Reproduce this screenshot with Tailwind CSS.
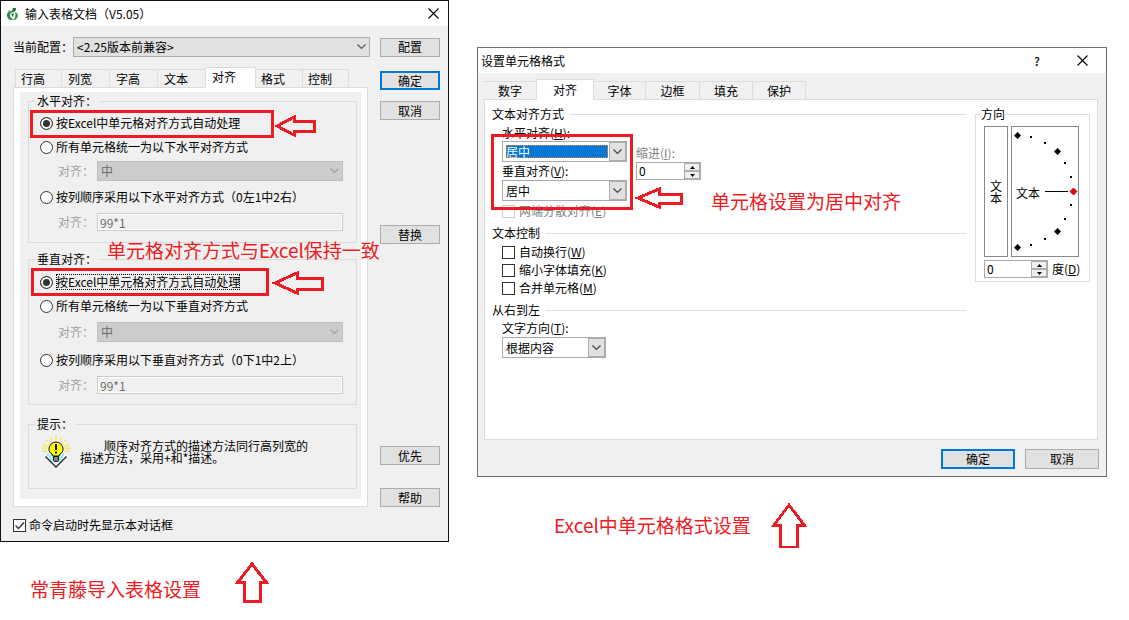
<!DOCTYPE html>
<html lang="zh-CN">

<head>
    <meta charset="UTF-8">
    <meta name="viewport" content="width=device-width, initial-scale=1.0">
    <title>单元格对齐设置</title>
    <script src="https://cdn.jsdelivr.net/npm/@tailwindcss/browser@4"></script>
</head>

<body class="flex items-start bg-white font-['Noto_Sans_CJK_SC',sans-serif] text-[12px] leading-4 text-black">
    <!-- Import dialog -->
    <section class="w-[449px] shrink-0">
        <div class="relative">
            <div class="border border-[#111] bg-[#f0f0f0]">
                <!-- Title bar -->
                <header class="flex h-[25px] items-center bg-white pr-[9px] pl-[5px]">
                    <svg class="mr-1.5 h-[14px] w-[13px]" viewBox="0 0 13 14">
                        <path d="M9 1l1 2-2 2C6 5 4 6 4 8c0 2 1 3 3 4l-1 1C3 13 1 11 1 8c0-3 3-4 5-4z" fill="#2f8a4a" />
                        <path d="M9 5c3 1 4 4 2 6-1 2-3 2-5 2 3-1 4-4 3-8z" fill="#3f9a55" />
                        <path d="M7 1h3l-1 3-3 1z" fill="#1b6b30" />
                        <path d="M2 4l2-1-1 2zM5 7l3-1-1 4z" fill="#1f7a3a" />
                    </svg>
                    <h1 class="flex-1">输入表格文档（V5.05）</h1>
                    <button type="button" aria-label="关闭">
                        <svg class="h-[11px] w-[11px]" viewBox="0 0 11 11" fill="none" stroke="#000" stroke-width="1.1">
                            <path d="M.5.5l10 10M10.500 .5l-10 10" />
                        </svg>
                    </button>
                </header>

                <form class="pt-[11px] pr-2 pb-2 pl-3">
                    <!-- Current profile -->
                    <div class="flex items-center">
                        <label for="profile" class="w-[60px]">当前配置：</label>
                        <div class="relative flex-1">
                            <select id="profile" class="block h-5 w-full appearance-none border border-[#adadad] bg-[#e1e1e1] pl-[3px]">
                                <option>&lt;2.25版本前兼容&gt;</option>
                            </select>
                            <svg class="pointer-events-none absolute top-[7px] right-1 h-[6px] w-[9px]" viewBox="0 0 9 6" fill="none" stroke="#555" stroke-width="1.2">
                                <path d="M.5 .5l4 4l4-4" />
                            </svg>
                        </div>
                        <button type="button" class="ml-2.5 h-[19px] w-[60px] border border-[#adadad] bg-[#e1e1e1]">配置</button>
                    </div>

                    <div class="flex gap-3 pt-2.5">
                        <div class="flex-1">
                            <!-- Tabs -->
                            <nav class="flex items-end pl-0.5">
                                <button type="button" class="h-[18px] w-[47px] border border-b-0 border-[#dcdcdc] pl-[5px] text-left">行高</button>
                                <button type="button" class="h-[18px] w-12 border border-b-0 border-l-0 border-[#dcdcdc] pl-[6px] text-left">列宽</button>
                                <button type="button" class="h-[18px] w-12 border border-b-0 border-l-0 border-[#dcdcdc] pl-[6px] text-left">字高</button>
                                <button type="button" class="h-[18px] w-[47px] border-t border-[#dcdcdc] pl-[6px] text-left">文本</button>
                                <button type="button" class="relative z-10 -mb-px h-[21px] w-[51px] border border-b-0 border-[#dcdcdc] bg-white pb-0.5 pl-[6px] text-left">对齐</button>
                                <button type="button" class="h-[18px] w-[47px] border border-b-0 border-l-0 border-[#dcdcdc] pl-[5px] text-left">格式</button>
                                <button type="button" class="h-[18px] w-[46px] border border-b-0 border-l-0 border-[#dcdcdc] pl-[5px] text-left">控制</button>
                            </nav>

                            <!-- Tab page -->
                            <div class="border border-[#dcdcdc] bg-white pt-1 pr-[6px] pb-[7px] pl-[6px]">
                                <div class="bg-[#f0f0f0] pt-px pr-1 pb-2.5 pl-2">
                                    <fieldset class="border border-[#dcdcdc] pt-1.5 pr-[13px] pb-[11px] pl-[11px]">
                                        <legend class="ml-[-5px] px-0.5">水平对齐：</legend>
                                        <div class="flex items-center gap-[3px]">
                                            <input type="radio" id="h1" name="horizontal" checked class="h-[13px] w-[13px] appearance-none rounded-full border border-[#333] bg-white checked:bg-[#333] checked:shadow-[inset_0_0_0_2px_#fff]">
                                            <label for="h1">按Excel中单元格对齐方式自动处理</label>
                                        </div>
                                        <div class="mt-2 flex items-center gap-[3px]">
                                            <input type="radio" id="h2" name="horizontal" class="h-[13px] w-[13px] appearance-none rounded-full border border-[#333] bg-white checked:bg-[#333] checked:shadow-[inset_0_0_0_2px_#fff]">
                                            <label for="h2">所有单元格统一为以下水平对齐方式</label>
                                        </div>
                                        <div class="mt-1.5 flex items-center pl-[18px]">
                                            <label for="hAll" class="w-[39px] text-[#a0a0a0]">对齐：</label>
                                            <div class="relative flex-1">
                                                <select id="hAll" disabled class="block h-5 w-full appearance-none border border-[#bfbfbf] bg-[#ccc] pl-[3px] text-[#6d6d6d] opacity-100">
                                                    <option>中</option>
                                                </select>
                                                <svg class="pointer-events-none absolute top-[7px] right-1 h-[6px] w-[9px]" viewBox="0 0 9 6" fill="none" stroke="#a0a0a0" stroke-width="1.2">
                                                    <path d="M.5 .5l4 4l4-4" />
                                                </svg>
                                            </div>
                                        </div>
                                        <div class="mt-2 flex items-center gap-[3px]">
                                            <input type="radio" id="h3" name="horizontal" class="h-[13px] w-[13px] appearance-none rounded-full border border-[#333] bg-white checked:bg-[#333] checked:shadow-[inset_0_0_0_2px_#fff]">
                                            <label for="h3">按列顺序采用以下水平对齐方式（0左1中2右）</label>
                                        </div>
                                        <div class="mt-2 flex items-center pl-[18px]">
                                            <label for="hCols" class="w-[39px] text-[#a0a0a0]">对齐：</label>
                                            <input type="text" id="hCols" value="99*1" disabled class="h-[18px] min-w-0 flex-1 border border-[#ccc] pl-0.5 text-[#6d6d6d] inset-ring inset-ring-white">
                                        </div>
                                    </fieldset>

                                    <fieldset class="mt-2 border border-[#dcdcdc] pt-[7px] pr-[13px] pb-2.5 pl-[11px]">
                                        <legend class="ml-[-5px] px-0.5">垂直对齐：</legend>
                                        <div class="flex items-center gap-[3px]">
                                            <input type="radio" id="v1" name="vertical" checked class="h-[13px] w-[13px] appearance-none rounded-full border border-[#333] bg-white checked:bg-[#333] checked:shadow-[inset_0_0_0_2px_#fff]">
                                            <label for="v1" class="outline outline-dotted outline-black -outline-offset-1">按Excel中单元格对齐方式自动处理</label>
                                        </div>
                                        <div class="mt-2 flex items-center gap-[3px]">
                                            <input type="radio" id="v2" name="vertical" class="h-[13px] w-[13px] appearance-none rounded-full border border-[#333] bg-white checked:bg-[#333] checked:shadow-[inset_0_0_0_2px_#fff]">
                                            <label for="v2">所有单元格统一为以下垂直对齐方式</label>
                                        </div>
                                        <div class="mt-2 flex items-center pl-[18px]">
                                            <label for="vAll" class="w-[39px] text-[#a0a0a0]">对齐：</label>
                                            <div class="relative flex-1">
                                                <select id="vAll" disabled class="block h-5 w-full appearance-none border border-[#bfbfbf] bg-[#ccc] pl-[3px] text-[#6d6d6d] opacity-100">
                                                    <option>中</option>
                                                </select>
                                                <svg class="pointer-events-none absolute top-[7px] right-1 h-[6px] w-[9px]" viewBox="0 0 9 6" fill="none" stroke="#a0a0a0" stroke-width="1.2">
                                                    <path d="M.5 .5l4 4l4-4" />
                                                </svg>
                                            </div>
                                        </div>
                                        <div class="mt-2.5 flex items-center gap-[3px]">
                                            <input type="radio" id="v3" name="vertical" class="h-[13px] w-[13px] appearance-none rounded-full border border-[#333] bg-white checked:bg-[#333] checked:shadow-[inset_0_0_0_2px_#fff]">
                                            <label for="v3">按列顺序采用以下垂直对齐方式（0下1中2上）</label>
                                        </div>
                                        <div class="mt-2 flex items-center pl-[18px]">
                                            <label for="vCols" class="w-[39px] text-[#a0a0a0]">对齐：</label>
                                            <input type="text" id="vCols" value="99*1" disabled class="h-[18px] min-w-0 flex-1 border border-[#ccc] pl-0.5 text-[#6d6d6d] inset-ring inset-ring-white">
                                        </div>
                                    </fieldset>

                                    <!-- Hint -->
                                    <fieldset class="mt-[11px] flex gap-2.5 border border-[#dcdcdc] pt-1 pb-5 pl-[13px]">
                                        <legend class="ml-[-7px] px-0.5">提示：</legend>
                                        <svg class="h-8 w-7 shrink-0" viewBox="0 0 28 32">
                                            <path d="M3.500 20.500l3-3h15l3 3-10.500 10.500z" fill="#fff" />
                                            <path d="M5 19h18M7 21h14M8 23h12M10 25h8" stroke="#00e5ee" stroke-dasharray="2 1" stroke-width="1.200" />
                                            <path d="M3.500 20.500l10.500 10.500l10.500-10.500" fill="none" stroke="#222" stroke-width="1.300" />
                                            <path d="M11 20l-1-2c-2-1-3-3-3-5a7 7 0 0 1 14 0c0 2-1 4-3 5l-1 2z" fill="#ff0" stroke="#111" />
                                            <path d="M11.500 20.500h5v4l-1 1h-3l-1-1z" fill="#808080" stroke="#111" />
                                            <path d="M14 8v6M14 15.500v2" stroke="#111" stroke-width="2" />
                                            <path d="M14 0v4M9 2l1 3M19 2l-1 3M4 4l3 3M24 4l-3 3M0 12h5M23 12h5M1 9l4 1M27 9l-4 1M1 15h4M27 15h-4" stroke="#f5e800" stroke-width="1.300" stroke-dasharray="2 1" />
                                        </svg>
                                        <p class="w-[230px] pt-1 indent-6 leading-3">顺序对齐方式的描述方法同行高列宽的描述方法，采用+和*描述。</p>
                                    </fieldset>
                                </div>
                            </div>
                        </div>

                        <!-- Command buttons -->
                        <div class="flex w-[60px] flex-col pt-1">
                            <button type="submit" class="h-[19px] border-2 border-[#0078d7] bg-[#e1e1e1] leading-none">确定</button>
                            <button type="button" class="mt-[11px] h-[19px] border border-[#adadad] bg-[#e1e1e1]">取消</button>
                            <button type="button" class="mt-[105px] h-[19px] border border-[#adadad] bg-[#e1e1e1]">替换</button>
                            <button type="button" class="mt-auto h-[19px] border border-[#adadad] bg-[#e1e1e1]">优先</button>
                            <button type="button" class="mt-[23px] h-[19px] border border-[#adadad] bg-[#e1e1e1]">帮助</button>
                        </div>
                    </div>

                    <div class="mt-2.5 flex items-center gap-[3px]">
                        <span class="relative h-[13px] w-[13px]">
                            <input type="checkbox" id="showOnStart" checked class="block h-[13px] w-[13px] appearance-none border border-[#333] bg-white">
                            <svg class="pointer-events-none absolute inset-0" viewBox="0 0 13 13" fill="none" stroke="#333" stroke-width="1.300">
                                <path d="M2.500 6.500l3 3l5.500-6" />
                            </svg>
                        </span>
                        <label for="showOnStart">命令启动时先显示本对话框</label>
                    </div>
                </form>
            </div>

            <!-- Red marks -->
            <svg class="pointer-events-none absolute inset-0 h-full w-full" fill="none" stroke="#ed1c24" stroke-width="3" shape-rendering="crispEdges">
                <rect x="31.500" y="111.500" width="241" height="25" />
                <path d="M277 126l17-9v4h20v10h-20v4z" />
                <rect x="32.500" y="269.500" width="235" height="25" />
                <path d="M275 283l22-10v5h25v11h-25v4z" />
            </svg>
            <p class="absolute top-[236px] left-[107px] text-[19px] leading-7 whitespace-nowrap text-[#ed1c24]">单元格对齐方式与Excel保持一致</p>
        </div>

        <div class="flex items-end gap-8 pt-[18px] pl-[30px] text-[19px] leading-7 text-[#ed1c24]">
            <p>常青藤导入表格设置</p>
            <svg class="h-[43px] w-9" viewBox="0 0 36 43" fill="none" stroke="#ed1c24" stroke-width="3" shape-rendering="crispEdges">
                <path d="M19 4l14 18h-6v19h-16v-19h-6z" />
            </svg>
        </div>
    </section>

    <!-- Cell format dialog -->
    <section class="mt-[47px] mr-[22px] ml-7 min-w-0 flex-1">
        <div class="relative">
            <div class="border border-[#707070] bg-[#f0f0f0]">
                <header class="flex h-[25px] items-center bg-white pr-[18px] pl-[3px]">
                    <h1 class="flex-1">设置单元格格式</h1>
                    <button type="button" class="mr-9 w-2 font-medium">?</button>
                    <button type="button" aria-label="关闭">
                        <svg class="h-[11px] w-[11px]" viewBox="0 0 11 11" fill="none" stroke="#000" stroke-width="1.1">
                            <path d="M.5.5l10 10M10.500 .5l-10 10" />
                        </svg>
                    </button>
                </header>

                <form class="px-[7px] pt-1.5 pb-[7px] pl-1.5">
                    <nav class="flex items-end">
                        <button type="button" class="h-[18px] w-[52px] border-t border-[#dcdcdc]">数字</button>
                        <button type="button" class="relative z-10 -mb-px h-[21px] w-[58px] border border-b-0 border-[#dcdcdc] bg-white">对齐</button>
                        <button type="button" class="h-[18px] w-[52px] border border-b-0 border-l-0 border-[#dcdcdc]">字体</button>
                        <button type="button" class="h-[18px] w-[54px] border border-b-0 border-l-0 border-[#dcdcdc]">边框</button>
                        <button type="button" class="h-[18px] w-[53px] border border-b-0 border-l-0 border-[#dcdcdc]">填充</button>
                        <button type="button" class="h-[18px] w-[53px] border border-b-0 border-l-0 border-[#dcdcdc]">保护</button>
                    </nav>

                    <div class="mr-px flex min-h-[341px] items-start gap-[9px] border border-[#dcdcdc] bg-white pt-1.5 pr-[7px] pl-[7px]">
                        <div class="min-w-0 flex-1">
                            <!-- Text alignment -->
                            <h2 class="flex items-center gap-1.5 after:h-px after:flex-1 after:bg-[#dcdcdc]">文本对齐方式</h2>
                            <div class="flex gap-[9px] pt-[3px] pl-2.5">
                                <div class="w-[125px]">
                                    <label for="horizontal" class="block">水平对齐(<u>H</u>):</label>
                                    <div class="relative border border-[#a9a9ae] bg-white py-[3px] pr-[18px] pl-[3px]">
                                        <select id="horizontal" class="block h-[13px] w-full appearance-none bg-[#0078d7] leading-[13px] text-white outline outline-dotted outline-[#ff8728] -outline-offset-1">
                                            <option>居中</option>
                                        </select>
                                        <span class="pointer-events-none absolute inset-y-0 right-0 flex w-[17px] items-center justify-center border border-[#adadad] bg-[#e1e1e1]">
                                            <svg class="h-[6px] w-[9px]" viewBox="0 0 9 6" fill="none" stroke="#444" stroke-width="1.2">
                                                <path d="M.5 .5l4 4l4-4" />
                                            </svg>
                                        </span>
                                    </div>
                                    <label for="vertical" class="mt-px block">垂直对齐(<u>V</u>):</label>
                                    <div class="relative mt-px">
                                        <select id="vertical" class="block h-[21px] w-full appearance-none border border-[#a9a9ae] bg-white pl-[3px]">
                                            <option>居中</option>
                                        </select>
                                        <span class="pointer-events-none absolute inset-y-px right-px flex w-[17px] items-center justify-center border border-[#adadad] bg-[#e1e1e1]">
                                            <svg class="h-[6px] w-[9px]" viewBox="0 0 9 6" fill="none" stroke="#444" stroke-width="1.2">
                                                <path d="M.5 .5l4 4l4-4" />
                                            </svg>
                                        </span>
                                    </div>
                                    <div class="mt-0.5 flex items-center gap-1 text-[#838383]">
                                        <input type="checkbox" id="distributed" disabled class="h-[13px] w-[13px] appearance-none border border-[#ccc] bg-white">
                                        <label for="distributed">两端分散对齐(<u>E</u>)</label>
                                    </div>
                                </div>
                                <div class="pt-5">
                                    <label for="indent" class="block text-[#838383]">缩进(<u>I</u>):</label>
                                    <div class="mt-px flex h-[18px] w-[65px] border border-[#a9a9ae] bg-white">
                                        <input type="text" id="indent" value="0" class="w-full min-w-0 pl-0.5">
                                        <span class="flex w-4 shrink-0 flex-col">
                                            <button type="button" aria-label="增加" class="flex flex-1 items-center justify-center border border-[#adadad] bg-[#f0f0f0]">
                                                <svg class="h-[3px] w-[5px]" viewBox="0 0 5 3"><path d="M2.500 0L5 3H0z" /></svg>
                                            </button>
                                            <button type="button" aria-label="减少" class="flex flex-1 items-center justify-center border border-[#adadad] bg-[#f0f0f0]">
                                                <svg class="h-[3px] w-[5px]" viewBox="0 0 5 3"><path d="M2.500 3L0 0h5z" /></svg>
                                            </button>
                                        </span>
                                    </div>
                                </div>
                            </div>

                            <!-- Text control -->
                            <h2 class="mt-1.5 mb-0.5 flex items-center gap-1.5 after:h-px after:flex-1 after:bg-[#dcdcdc]">文本控制</h2>
                            <div class="flex h-[18px] items-center gap-1 pl-2.5">
                                <input type="checkbox" id="wrap" class="h-[13px] w-[13px] appearance-none border border-[#333] bg-white">
                                <label for="wrap">自动换行(<u>W</u>)</label>
                            </div>
                            <div class="flex h-[18px] items-center gap-1 pl-2.5">
                                <input type="checkbox" id="shrink" class="h-[13px] w-[13px] appearance-none border border-[#333] bg-white">
                                <label for="shrink">缩小字体填充(<u>K</u>)</label>
                            </div>
                            <div class="flex h-[18px] items-center gap-1 pl-2.5">
                                <input type="checkbox" id="merge" class="h-[13px] w-[13px] appearance-none border border-[#333] bg-white">
                                <label for="merge">合并单元格(<u>M</u>)</label>
                            </div>

                            <!-- Right to left -->
                            <h2 class="mt-[5px] mb-0.5 flex items-center gap-1.5 after:h-px after:flex-1 after:bg-[#dcdcdc]">从右到左</h2>
                            <div class="w-[114px] pl-2.5">
                                <label for="textDir" class="block">文字方向(<u>T</u>):</label>
                                <div class="relative mt-px">
                                    <select id="textDir" class="block h-[21px] w-full appearance-none border border-[#a9a9ae] bg-white pl-[3px]">
                                        <option>根据内容</option>
                                    </select>
                                    <span class="pointer-events-none absolute inset-y-px right-px flex w-[17px] items-center justify-center border border-[#adadad] bg-[#e1e1e1]">
                                        <svg class="h-[6px] w-[9px]" viewBox="0 0 9 6" fill="none" stroke="#444" stroke-width="1.2">
                                            <path d="M.5 .5l4 4l4-4" />
                                        </svg>
                                    </span>
                                </div>
                            </div>
                        </div>

                        <!-- Orientation -->
                        <fieldset class="w-[115px] shrink-0 border border-[#dcdcdc] px-2 pt-1 pb-[3px]">
                            <legend class="ml-[-4px] px-px">方向</legend>
                            <div class="flex gap-[3px]">
                                <button type="button" class="w-6 border border-[#828790] bg-white px-[5px] leading-3">文本</button>
                                <div class="relative h-[131px] w-[68px] border border-[#828790]">
                                    <svg class="h-[129px] w-[66px]" viewBox="1012 127 66 129">
                                        <path d="M1045 191.500h23" stroke="#000" />
                                        <g fill="#000">
                                            <path d="M1017.500 132l3.500 3.500-3.500 3.500-3.500-3.500zM1057.500 148l3.500 3.500-3.500 3.500-3.500-3.500zM1057.500 228l3.500 3.500-3.500 3.500-3.500-3.500zM1017.500 244l3.500 3.500-3.500 3.500-3.500-3.500z" />
                                            <path d="M1030 136h2v2h-2zM1044 142h2v2h-2zM1064 162h2v2h-2zM1070 176h2v2h-2zM1070 204h2v2h-2zM1064 218h2v2h-2zM1044 238h2v2h-2zM1030 244h2v2h-2z" />
                                        </g>
                                        <path d="M1073.500 188l3.500 3.500-3.500 3.500-3.500-3.500z" fill="#f00" stroke="#500" stroke-width=".7" />
                                    </svg>
                                    <span class="absolute top-[58px] left-[4px]">文本</span>
                                </div>
                            </div>
                            <div class="mt-[3px] flex items-center gap-1">
                                <div class="flex h-[18px] w-16 border border-[#a9a9ae] bg-white">
                                    <input type="text" id="degrees" value="0" class="w-full min-w-0 pl-0.5">
                                    <span class="flex w-4 shrink-0 flex-col">
                                        <button type="button" aria-label="增加" class="flex flex-1 items-center justify-center border border-[#adadad] bg-[#f0f0f0]">
                                            <svg class="h-[3px] w-[5px]" viewBox="0 0 5 3"><path d="M2.500 0L5 3H0z" /></svg>
                                        </button>
                                        <button type="button" aria-label="减少" class="flex flex-1 items-center justify-center border border-[#adadad] bg-[#f0f0f0]">
                                            <svg class="h-[3px] w-[5px]" viewBox="0 0 5 3"><path d="M2.500 3L0 0h5z" /></svg>
                                        </button>
                                    </span>
                                </div>
                                <label for="degrees" class="whitespace-nowrap">度(<u>D</u>)</label>
                            </div>
                        </fieldset>
                    </div>

                    <div class="mt-[9px] flex justify-end gap-2.5">
                        <button type="submit" class="h-5 w-[74px] border-2 border-[#0078d7] bg-[#e1e1e1]">确定</button>
                        <button type="button" class="h-5 w-[74px] border border-[#adadad] bg-[#e1e1e1]">取消</button>
                    </div>
                </form>
            </div>

            <!-- Red marks -->
            <svg class="pointer-events-none absolute inset-0 h-full w-full" fill="none" stroke="#ed1c24" stroke-width="3" shape-rendering="crispEdges">
                <rect x="15.500" y="88.500" width="139" height="73" />
                <path d="M161 151l21-9v5h22v9h-22v4z" />
            </svg>
            <p class="absolute top-[140px] left-[234px] text-[19px] leading-7 whitespace-nowrap text-[#ed1c24]">单元格设置为居中对齐</p>
        </div>

        <div class="flex items-center gap-5 pt-[25px] pl-[77px] text-[19px] leading-7 text-[#ed1c24]">
            <p>Excel中单元格格式设置</p>
            <svg class="h-[46px] w-9" viewBox="0 0 36 46" fill="none" stroke="#ed1c24" stroke-width="3" shape-rendering="crispEdges">
                <path d="M18 3l15 20h-7v22h-17v-22h-6z" />
            </svg>
        </div>
    </section>
</body>

</html>
